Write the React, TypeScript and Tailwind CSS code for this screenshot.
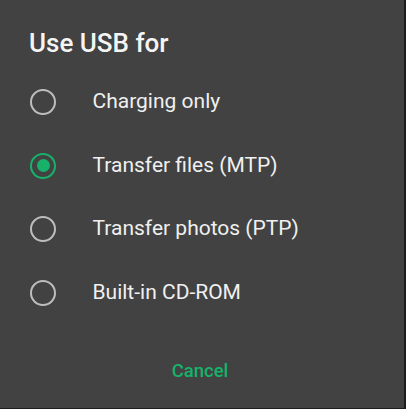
import React, { useState } from "react";

const options = [
    "Charging only",
    "Transfer files (MTP)",
    "Transfer photos (PTP)",
    "Built-in CD-ROM",
];

function Radio({ checked }: { checked: boolean }) {
    return (
        <span
            className={`flex h-[26px] w-[26px] shrink-0 items-center justify-center rounded-full border-[2.6px] ${
                checked ? "border-[#17b26a]" : "border-[#bdbdbd]"
            }`}
        >
            {checked && <span className="h-[13px] w-[13px] rounded-full bg-[#17b26a]" />}
        </span>
    );
}

export default function App() {
    const [selected, setSelected] = useState(1);

    return (
        <div className="flex h-[409px] w-[406px] flex-col bg-[#1c1c1c]" style={{ fontFamily: "Roboto, 'Liberation Sans', sans-serif" }}>
            <div className="flex h-[408px] w-[404px] flex-col bg-[#424242]">
                {/* Title */}
                <h2 className="pl-[29px] pt-[27px] text-[26px] font-medium leading-[32px] text-[#f5f5f5]">
                    Use USB for
                </h2>

                {/* Options */}
                <div className="mt-[11px] flex flex-col">
                    {options.map((label, i) => (
                        <button
                            key={label}
                            onClick={() => setSelected(i)}
                            className="flex h-[63.7px] items-center pl-[30px] text-left"
                        >
                            <Radio checked={selected === i} />
                            <span className="ml-[36.5px] text-[21px] text-[#f0f0f0]">{label}</span>
                        </button>
                    ))}
                </div>

                {/* Actions */}
                <div className="mt-[34px] flex justify-center pr-[4px]">
                    <button className="text-[18.5px] font-medium leading-[24px] text-[#17b26a]">
                        Cancel
                    </button>
                </div>
            </div>
        </div>
    );
}
